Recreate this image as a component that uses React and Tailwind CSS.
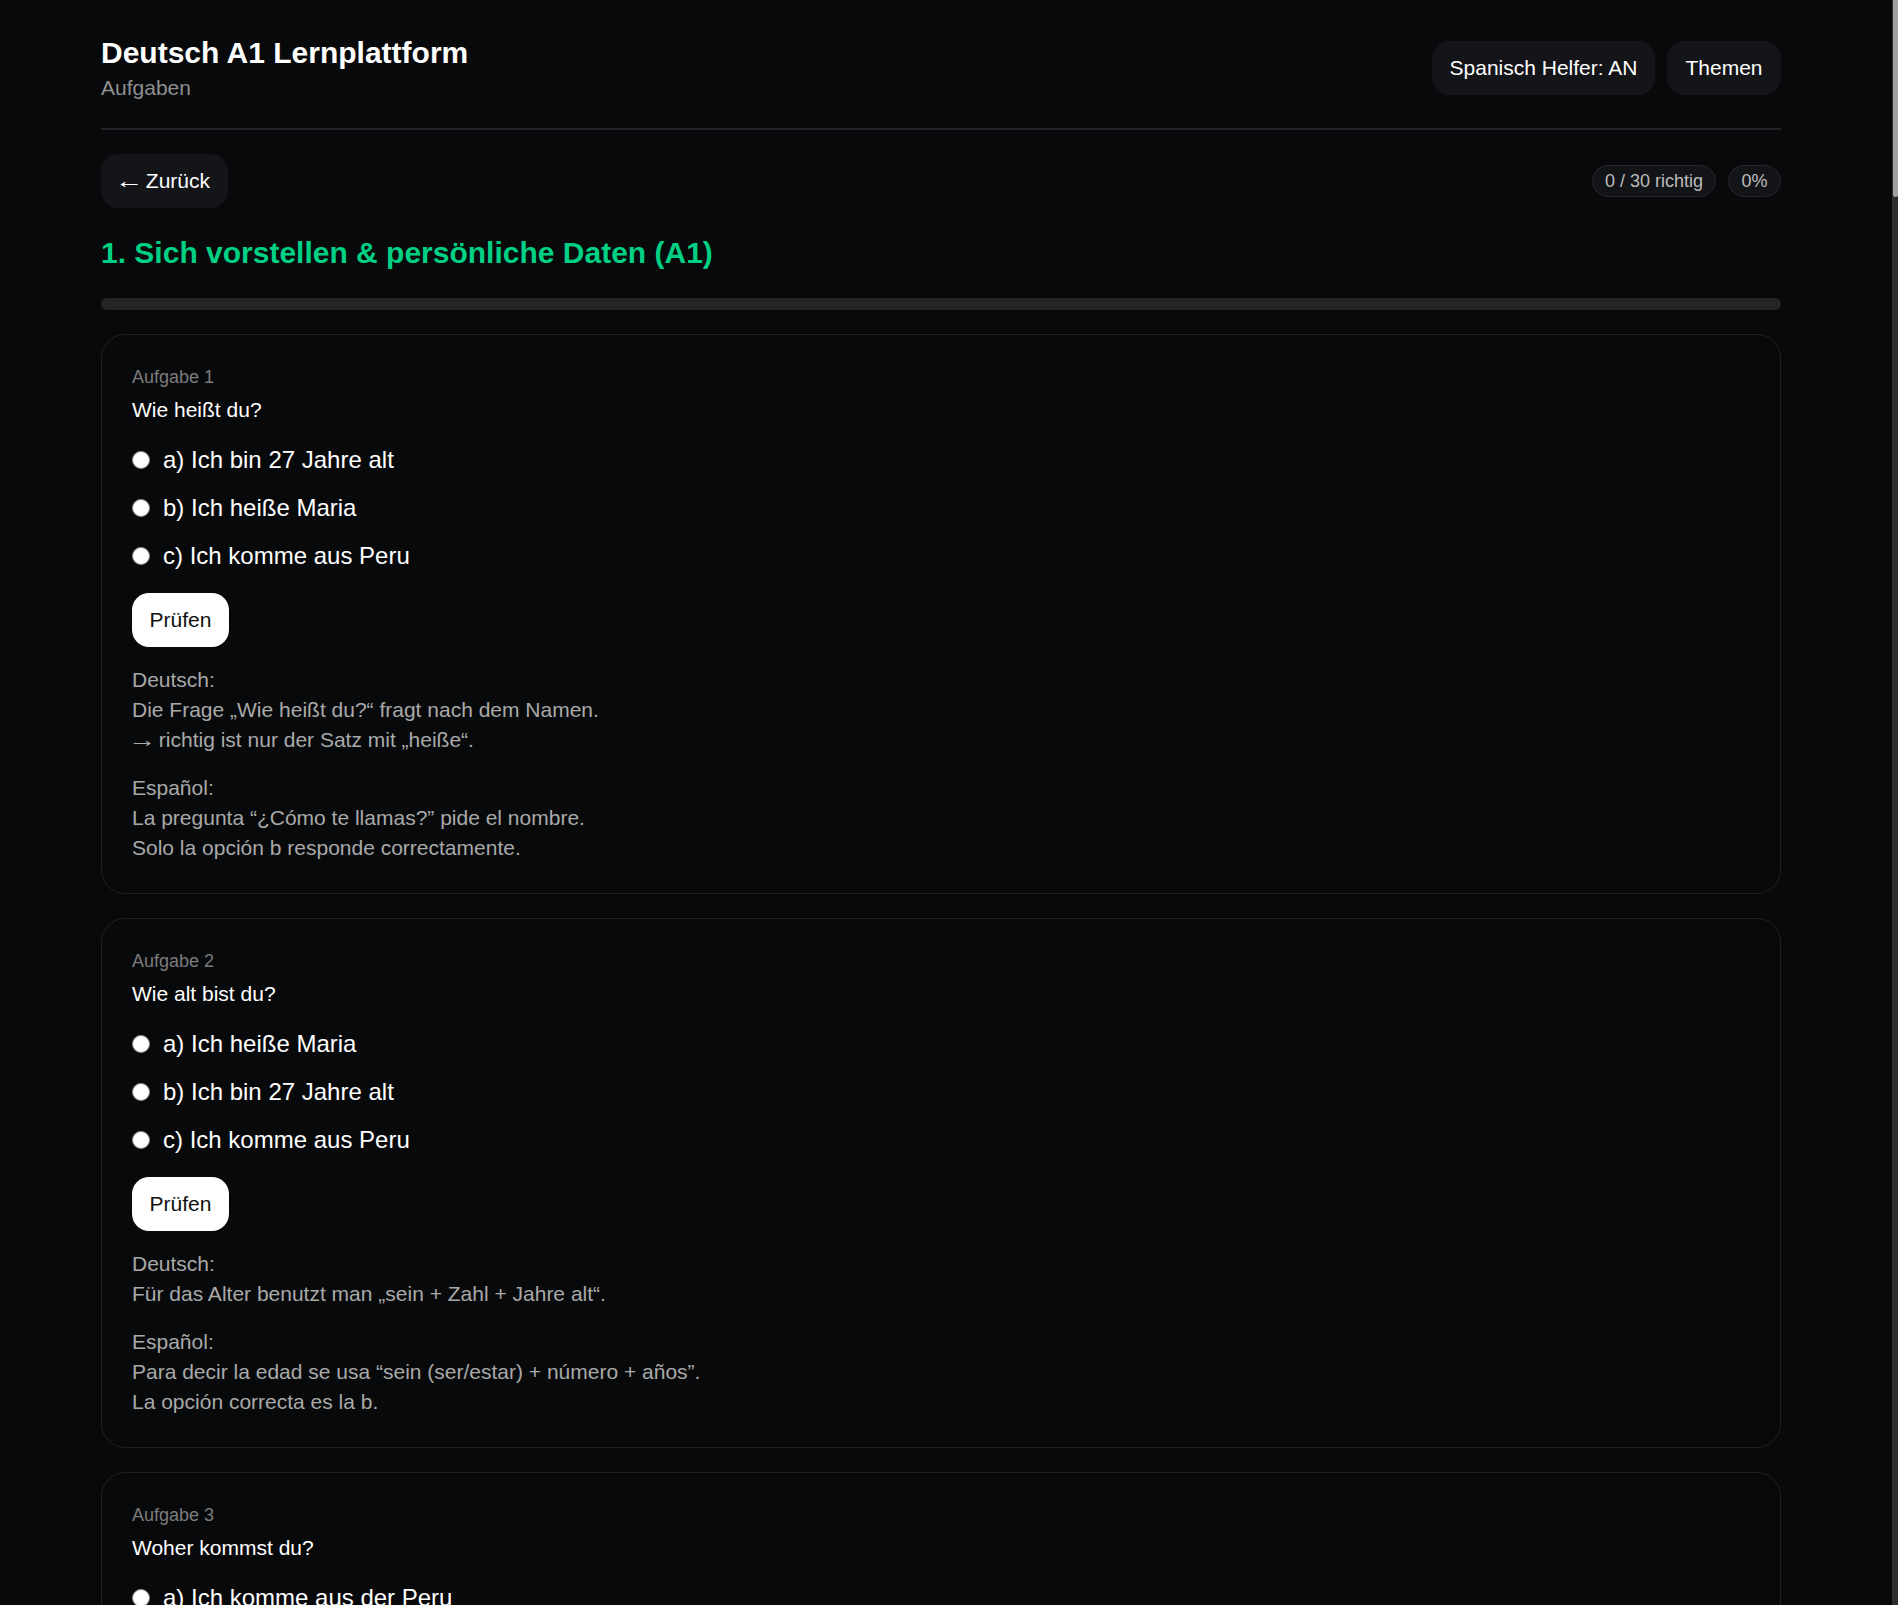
import React from "react";

const Arrow = ({ c }) => <span className="inline-block scale-x-[1.35] origin-center">{c}</span>;

const tasks = [
  {
    n: 1,
    q: "Wie heißt du?",
    opts: ["a) Ich bin 27 Jahre alt", "b) Ich heiße Maria", "c) Ich komme aus Peru"],
    de: ["Die Frage „Wie heißt du?“ fragt nach dem Namen.", <><Arrow c="→" /> richtig ist nur der Satz mit „heiße“.</>],
    es: ["La pregunta “¿Cómo te llamas?” pide el nombre.", "Solo la opción b responde correctamente."],
  },
  {
    n: 2,
    q: "Wie alt bist du?",
    opts: ["a) Ich heiße Maria", "b) Ich bin 27 Jahre alt", "c) Ich komme aus Peru"],
    de: ["Für das Alter benutzt man „sein + Zahl + Jahre alt“."],
    es: ["Para decir la edad se usa “sein (ser/estar) + número + años”.", "La opción correcta es la b."],
  },
];

function Option({ name, label }) {
  return (
    <label className="flex items-center h-[48px] gap-[13px] text-[24px] leading-[30px] text-white">
      <input type="radio" name={name} className="appearance-none w-[18px] h-[18px] m-0 shrink-0 rounded-full bg-white border border-[#8a8a8a]" />
      <span>{label}</span>
    </label>
  );
}

function Task({ t }) {
  return (
    <section className="border border-[#1f2023] rounded-[24px] pt-[30px] pb-[30px] pl-[30px] pr-[29px]">
      <div className="text-[18px] leading-[24px] text-[#7c7c7c]">Aufgabe {t.n}</div>
      <div className="mt-[8px] text-[21px] leading-[26px] text-white">{t.q}</div>
      <div className="mt-[13px]">
        {t.opts.map((o) => (
          <Option key={o} name={`t${t.n}`} label={o} />
        ))}
      </div>
      <button className="block mt-[13px] h-[54px] w-[97px] rounded-[17px] bg-white text-[21px] text-[#111111]">Prüfen</button>
      <div className="mt-[18px] text-[21px] leading-[30px] text-[#a9a9a9]">
        <div>Deutsch:</div>
        {t.de.map((l, i) => (
          <div key={i}>{l}</div>
        ))}
        <div className="mt-[18px]">Español:</div>
        {t.es.map((l, i) => (
          <div key={i}>{l}</div>
        ))}
      </div>
    </section>
  );
}

export default function App() {
  return (
    <div className="flex h-[1605px] overflow-hidden bg-[#08090b] font-['Liberation_Sans',Arial,sans-serif]">
      <main className="w-[1680px] ml-[101px] shrink-0">
        <header className="flex items-center justify-between h-[130px] pt-[9px] pb-[1px] border-b-2 border-[#232427]">
          <div>
            <h1 className="text-[30px] leading-[36px] font-bold text-white">Deutsch A1 Lernplattform</h1>
            <p className="mt-[3px] text-[21px] leading-[28px] text-[#8f8f8f]">Aufgaben</p>
          </div>
          <div className="flex gap-[12px]">
            <button className="h-[54px] w-[223px] rounded-[17px] bg-[#141518] text-[21px] text-white">Spanisch Helfer: AN</button>
            <button className="h-[54px] w-[114px] rounded-[17px] bg-[#141518] text-[21px] text-white">Themen</button>
          </div>
        </header>

        <div className="flex items-center justify-between mt-[24px]">
          <button className="h-[54px] w-[127px] rounded-[17px] bg-[#141518] text-[21px] text-white"><Arrow c="←" /> Zurück</button>
          <div className="flex gap-[12px]">
            <span className="flex items-center justify-center h-[32px] w-[124px] rounded-full border border-[#26272b] bg-[#131417] text-[18px] text-[#bcbcbc]">0 / 30 richtig</span>
            <span className="flex items-center justify-center h-[32px] w-[53px] rounded-full border border-[#26272b] bg-[#131417] text-[18px] text-[#bcbcbc]">0%</span>
          </div>
        </div>

        <h2 className="mt-[27px] text-[30px] leading-[36px] font-bold text-[#00d084]">1. Sich vorstellen &amp; persönliche Daten (A1)</h2>

        <div className="mt-[27px] h-[12px] rounded-full bg-[#252525]" />

        <div className="mt-[24px] flex flex-col gap-[24px]">
          {tasks.map((t) => (
            <Task key={t.n} t={t} />
          ))}
          <section className="border border-[#1f2023] rounded-[24px] pt-[30px] pb-[24px] pl-[30px] pr-[29px] h-[400px] shrink-0">
            <div className="text-[18px] leading-[24px] text-[#7c7c7c]">Aufgabe 3</div>
            <div className="mt-[8px] text-[21px] leading-[26px] text-white">Woher kommst du?</div>
            <div className="mt-[13px]">
              <Option name="t3" label="a) Ich komme aus der Peru" />
            </div>
          </section>
        </div>
      </main>

      <div className="ml-auto w-[6px] shrink-0 bg-[#2e2e2e]">
        <div className="ml-[1px] h-[197px] rounded-b-[3px] bg-[#a0a0a0]" />
      </div>
    </div>
  );
}
